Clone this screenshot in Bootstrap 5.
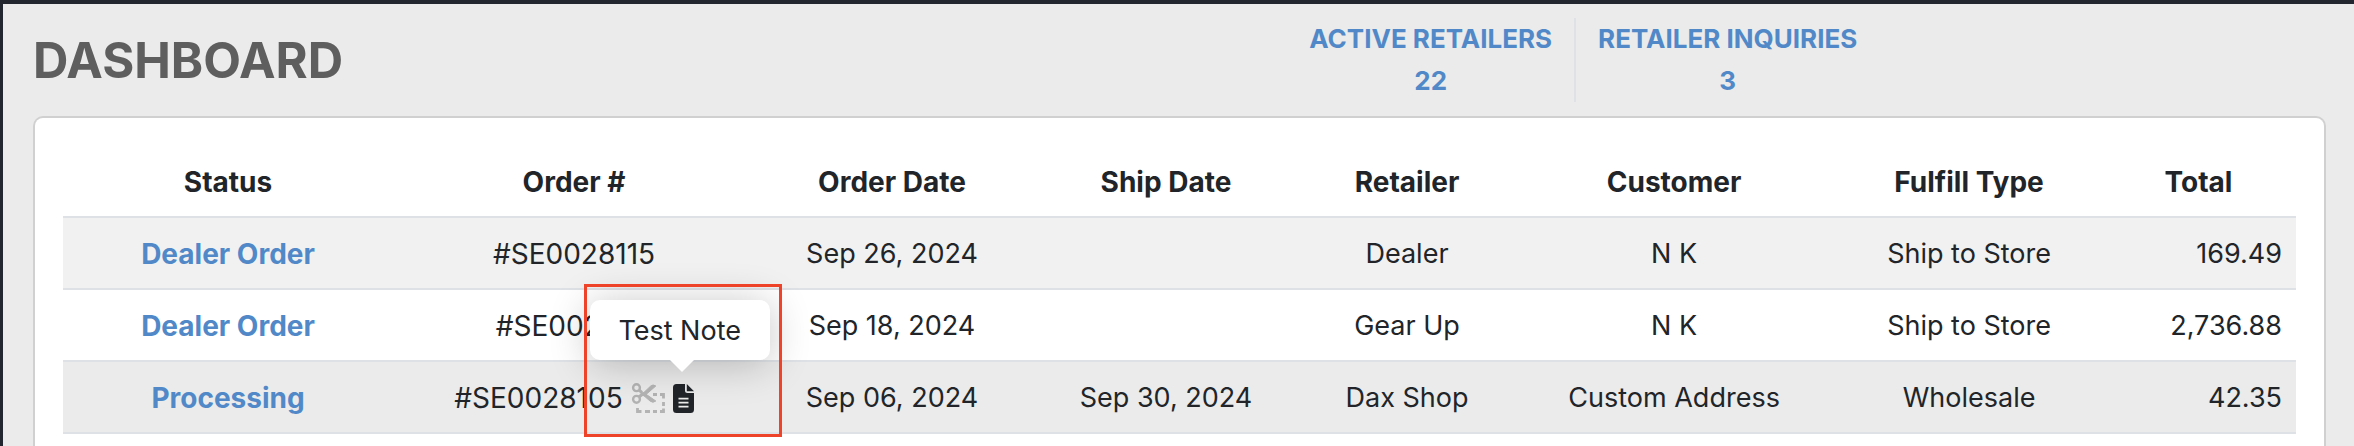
<!DOCTYPE html>
<html lang="en">
<head>
<meta charset="utf-8">
<meta name="viewport" content="width=device-width, initial-scale=1">
<title>Dashboard</title>
<link href="https://cdn.jsdelivr.net/npm/bootstrap@5.3.0/dist/css/bootstrap.min.css" rel="stylesheet">
<style>
  body { font-family: Inter, "Liberation Sans", sans-serif; font-size: 27px; line-height: 42px; color: #212529; background: #ebebeb; }
  .app-shell { border-top: 4px solid #22262e; border-left: 3px solid #22262e; padding: 14px 28px 0 30px; }
  .page-title { font-size: 49px; line-height: 56px; font-weight: 700; color: #5e5e5e; padding-top: 2px; }
  .title-side { flex: 0 0 54.7%; }
  .app-link { color: #5189c8; font-weight: 700; text-decoration: none; }
  .stat-link { font-size: 26px; padding: 0 22px; }
  .stat-link + .stat-link { border-left: 2px solid #dee2e6; }
  .panel { border: 2px solid #d0d0d0; border-bottom: 0; border-radius: 10px 10px 0 0; padding: 28px 28px 0; margin-top: 14px; }
  .orders { table-layout: fixed; --bs-table-striped-bg: #f1f1f1; --bs-table-color: #212529; }
  .orders > :not(caption) > * > * { padding: 15px 14px 13px; border-bottom: 2px solid #dee2e6; }
  .orders th, .orders td:first-child, .order-no { font-size: 28px; }
  .orders th { font-weight: 700; }
  .orders > tbody > tr.is-current > * { background: #ebebeb; box-shadow: none; }
  .icon-btn { border: 0; background: none; padding: 0; display: block; line-height: 0; }
  .note-pop { bottom: 100%; left: -83px; margin-bottom: 24px; width: 180px; height: 60px; line-height: 62px; background: #fff; border-radius: 10px; box-shadow: 0 4px 40px rgba(0,0,0,.24); z-index: 2; }
  .note-pop::after { content: ""; position: absolute; top: 100%; left: 80px; border: 12px solid transparent; border-top-color: #fff; border-bottom: 0; }
  .highlight { width: 198px; height: 153px; border: 3px solid #ee4328; left: 50%; bottom: -24px; transform: translateX(-50%); z-index: 3; pointer-events: none; }
</style>
</head>
<body>
<div class="app-shell min-vh-100 d-flex flex-column">
  <header class="d-flex align-items-center">
    <div class="title-side"><h1 class="page-title mb-0">DASHBOARD</h1></div>
    <nav class="d-flex text-center" aria-label="Retailers">
      <a class="app-link stat-link" href="#">ACTIVE RETAILERS<br>22</a>
      <a class="app-link stat-link" href="#">RETAILER INQUIRIES<br>3</a>
    </nav>
  </header>
  <main class="panel bg-white flex-grow-1">
    <table class="table table-striped orders text-center align-middle mb-0">
      <colgroup>
        <col style="width:14.78%"><col style="width:16.21%"><col style="width:12.27%"><col style="width:12.27%">
        <col style="width:9.32%"><col style="width:14.6%"><col style="width:11.82%"><col style="width:8.73%">
      </colgroup>
      <thead>
        <tr><th scope="col">Status</th><th scope="col">Order #</th><th scope="col">Order Date</th><th scope="col">Ship Date</th><th scope="col">Retailer</th><th scope="col">Customer</th><th scope="col">Fulfill Type</th><th scope="col">Total</th></tr>
      </thead>
      <tbody>
        <tr><td><a class="app-link" href="#">Dealer Order</a></td><td class="order-no">#SE0028115</td><td>Sep 26, 2024</td><td></td><td>Dealer</td><td>N K</td><td>Ship to Store</td><td class="text-end">169.49</td></tr>
        <tr><td><a class="app-link" href="#">Dealer Order</a></td><td class="order-no">#SE0028111</td><td>Sep 18, 2024</td><td></td><td>Gear Up</td><td>N K</td><td>Ship to Store</td><td class="text-end">2,736.88</td></tr>
        <tr class="is-current">
          <td><a class="app-link" href="#">Processing</a></td>
          <td>
            <div class="d-flex justify-content-center align-items-center">
              <span class="order-no">#SE0028105</span>
              <button type="button" class="icon-btn mx-2" aria-label="Split order">
                <svg width="34" height="30" viewBox="0 0 34 30" fill="none" stroke="#b3b3b3">
                  <circle cx="5.5" cy="4.7" r="3.4" stroke-width="2.4"/>
                  <circle cx="5.5" cy="16.3" r="3.4" stroke-width="2.4"/>
                  <path d="M8 7 11 9.6M8 14 11 11.5" stroke-width="3"/>
                  <path d="M10 12.2 19.5 3.2Q22 .8 24.8 3L13.5 12.8ZM12.500 9.500 24.800 18Q22 20.500 19 18L9.800 10Z" fill="#b3b3b3" stroke="#b3b3b3" stroke-width="1"/>
                  <path d="M22 11.5h4M29 11.5h3.500v4M32.500 19v4M6.500 25v3.500h4M14 28.500h5M22 28.500h4M29 28.500h3.500v-3" stroke-width="2.8"/>
                </svg>
              </button>
              <span class="position-relative">
                <button type="button" class="icon-btn" aria-label="Order note" aria-describedby="order-note">
                  <svg width="21" height="29" viewBox="0 0 21 29">
                    <path fill="#212529" d="M3.500 0H12v6.500Q12 9 14.500 9H21v16.500Q21 29 17.500 29h-14Q0 29 0 25.500v-22Q0 0 3.500 0ZM13.800 0 21 7.200h-7.200Z"/>
                    <path d="M5.500 14.700h10M5.500 18.700h10M5.500 22.700h10" stroke="#ebebeb" stroke-width="1.800"/>
                  </svg>
                </button>
                <span class="note-pop position-absolute" role="tooltip" id="order-note">Test Note</span>
                <span class="highlight position-absolute"></span>
              </span>
            </div>
          </td>
          <td>Sep 06, 2024</td><td>Sep 30, 2024</td><td>Dax Shop</td><td>Custom Address</td><td>Wholesale</td><td class="text-end">42.35</td>
        </tr>
      </tbody>
    </table>
  </main>
</div>
<script src="https://cdn.jsdelivr.net/npm/bootstrap@5.3.0/dist/js/bootstrap.bundle.min.js"></script>
</body>
</html>
